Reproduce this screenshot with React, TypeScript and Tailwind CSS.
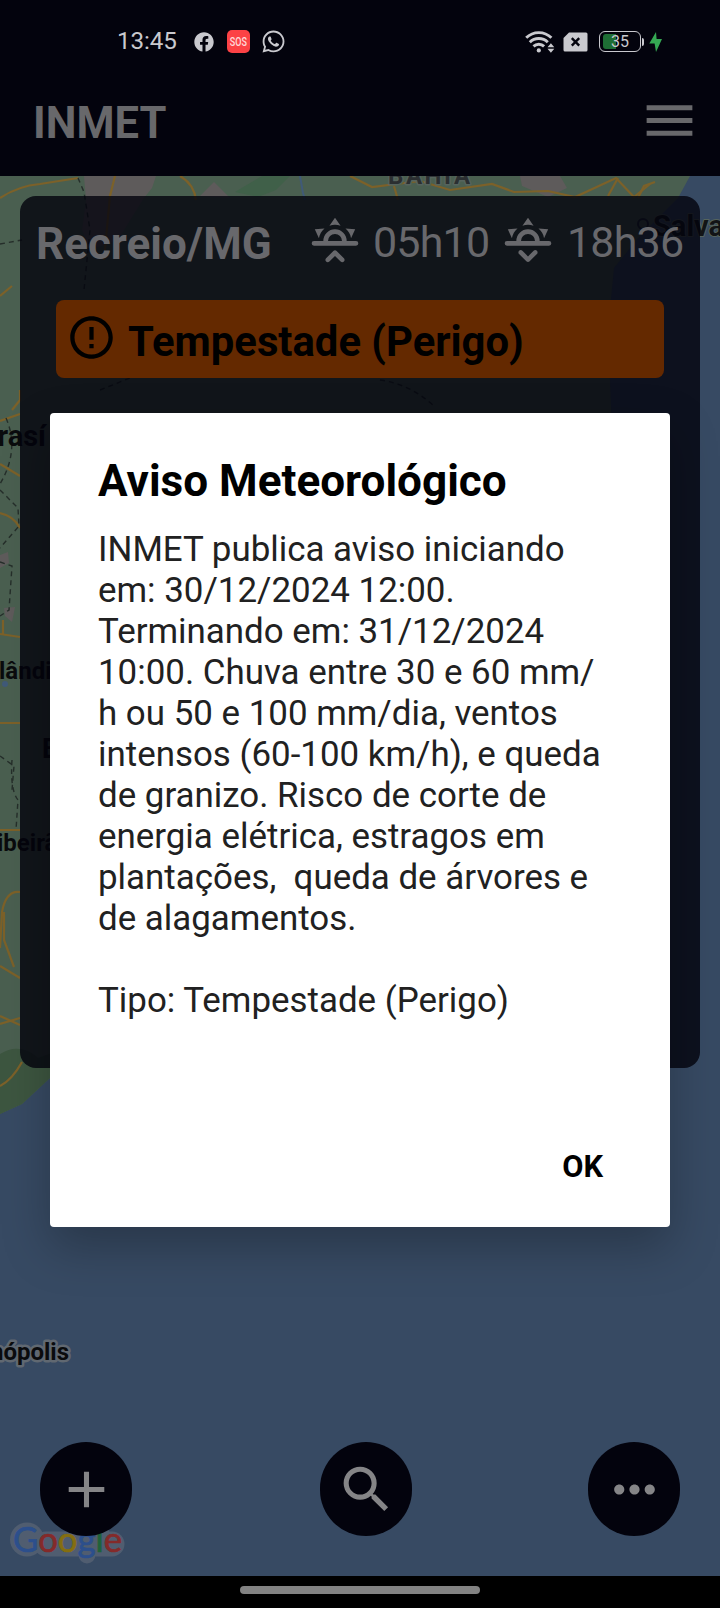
import { FaFacebook, FaWhatsapp } from 'react-icons/fa';
import { MdAdd, MdErrorOutline, MdMenu, MdMoreHoriz, MdSearch } from 'react-icons/md';

const SUN =
  'M3,12H7A5,5 0 0,1 12,7A5,5 0 0,1 17,12H21A1,1 0 0,1 22,13A1,1 0 0,1 21,14H3A1,1 0 0,1 2,13A1,1 0 0,1 3,12M15,12A3,3 0 0,0 12,9A3,3 0 0,0 9,12H15M12,2L14.39,5.42C13.65,5.15 12.84,5 12,5C11.16,5 10.35,5.15 9.61,5.42L12,2M3.34,7L7.5,6.65C6.9,7.16 6.36,7.78 5.94,8.5C5.5,9.24 5.25,10 5.11,10.79L3.34,7M20.65,7L18.88,10.79C18.74,10 18.47,9.23 18.05,8.5C17.63,7.78 17.1,7.15 16.5,6.64L20.65,7';
const UP =
  'M12.71,16.3L15.82,19.41C16.21,19.8 16.21,20.43 15.82,20.82C15.43,21.21 14.8,21.21 14.41,20.82L12,18.41L9.59,20.82C9.2,21.21 8.57,21.21 8.18,20.82C7.79,20.43 7.79,19.8 8.18,19.41L11.29,16.3C11.5,16.1 11.74,16 12,16C12.26,16 12.5,16.1 12.71,16.3Z';
const DOWN =
  'M12.71,20.71L15.82,17.6C16.21,17.21 16.21,16.57 15.82,16.18C15.43,15.79 14.8,15.79 14.41,16.18L12,18.59L9.59,16.18C9.2,15.79 8.57,15.79 8.18,16.18C7.79,16.57 7.79,17.21 8.18,17.6L11.29,20.71C11.5,20.9 11.74,21 12,21C12.26,21 12.5,20.9 12.71,20.71Z';

function SunIcon({ up }: { up?: boolean }) {
  return (
    <svg viewBox="0 0 24 24" className="h-14 w-14 shrink-0" fill="currentColor">
      <path d={SUN} />
      <path d={up ? UP : DOWN} />
    </svg>
  );
}

function StatusBar() {
  return (
    <div className="flex h-[83px] items-center justify-between pl-[117px] pr-[58px] text-[#c9c9ce]">
      <div className="flex items-center">
        <span className="w-[77px] text-[24.2px] leading-none tracking-[-0.1px]">13:45</span>
        <FaFacebook size={20} />
        <span className="ml-[13px] flex h-[23px] w-[23px] items-center justify-center rounded-[5px] bg-[#fc4245] text-[#ffd9d9]">
          <span className="scale-x-75 text-[12px] font-medium leading-none">SOS</span>
        </span>
        <FaWhatsapp size={25} className="ml-[11px]" />
      </div>
      <div className="flex items-center">
        <svg width="30" height="24" viewBox="0 0 30 24" fill="none" stroke="currentColor" strokeWidth="2.9">
          <path d="M1.2 7.8a18 18 0 0 1 25.2 0" />
          <path d="M4.8 12.2a12.8 12.8 0 0 1 18 0" />
          <path d="M8.5 16.4a7.6 7.6 0 0 1 10.6 0" />
          <circle cx="13.8" cy="20.4" r="2.1" fill="currentColor" stroke="none" />
          <path d="M22.5 17.3l3.4-4 3.4 4zM22.5 18.8h6.8l-3.4 4z" fill="currentColor" stroke="none" />
        </svg>
        <svg width="25" height="20" viewBox="0 0 25 20" className="ml-[8px]">
          <path d="M6 0.5h17a1.5 1.5 0 0 1 1.5 1.5v16a1.5 1.5 0 0 1-1.5 1.5h-21a1.5 1.5 0 0 1-1.5-1.5V6z" fill="currentColor" />
          <path d="M8.8 6.2l7.4 7.4M16.2 6.2l-7.4 7.4" stroke="#03030d" strokeWidth="2.4" />
        </svg>
        <div className="ml-[11px] flex items-center">
          <div className="relative flex h-[21px] w-[42px] items-center justify-center rounded-[6px] border-[1.5px] border-[#c9c9ce]">
            <div className="absolute left-[3px] top-[2px] h-[15px] w-[13px] rounded-l-[3px] bg-[#1e6e35]" />
            <span className="relative mt-px text-[16px] leading-none">35</span>
          </div>
          <div className="ml-px h-[8px] w-[2px] rounded-r-full bg-[#c9c9ce]" />
        </div>
        <svg width="13" height="20" viewBox="0 0 13 20" className="ml-[5px]">
          <path d="M7 0L0.3 11.5H5.6L7 20L13 7H7.6Z" fill="#35a853" />
        </svg>
      </div>
    </div>
  );
}

function GoogleMark() {
  return (
    <g>
      <g stroke="#505d70" fill="#505d70" strokeLinecap="round">
        <circle cx="27" cy="1539.5" r="17" stroke="none" />
        <path d="M46 1544H112" strokeWidth="25" />
        <path d="M87 1550V1555M101 1534V1540" strokeWidth="17" />
      </g>
      <text x="13" y="1552" fontSize="35" fontFamily="Lato, sans-serif" textLength="109" lengthAdjust="spacingAndGlyphs" strokeWidth="0.7">
        <tspan fill="#2c4f8c" stroke="#2c4f8c">G</tspan>
        <tspan fill="#842a2a" stroke="#842a2a">o</tspan>
        <tspan fill="#856e10" stroke="#856e10">o</tspan>
        <tspan fill="#2c4f8c" stroke="#2c4f8c">g</tspan>
        <tspan fill="#1f6339" stroke="#1f6339">l</tspan>
        <tspan fill="#842a2a" stroke="#842a2a">e</tspan>
      </text>
    </g>
  );
}

function MapBackground() {
  return (
    <svg viewBox="0 176 720 1400" className="absolute inset-0 h-full w-full" fontFamily="Roboto, sans-serif">
      <rect y="176" width="720" height="1400" fill="#374a63" />
      <path
        d="M0 176H690L678 198L640 236L614 268L608 330L612 430L590 560L520 760L330 900L150 1020L50 1078L22 1104L0 1114Z"
        fill="#4a5f50"
      />
      <path d="M0 1054Q20 1042 38 1058L66 1048V1068L50 1078L22 1104L0 1114Z" fill="#3d5640" />
      {/* farmland */}
      <g fill="#5e5b5b">
        <path d="M84 176H156L152 188L144 198L118 240L90 250L82 230L86 200Z" />
        <path d="M214 182L230 198L200 196Z" />
        <path d="M520 176H560L567 188L548 197L522 186Z" />
        <path d="M0 555L8 552L9 563L0 568ZM4 608L15 607L12 622L5 616Z" />
      </g>
      <path d="M235 192L262 176H290L276 190L258 197Z" fill="#406049" />
      <path d="M300 176L303 193L305 200" stroke="#405a78" strokeWidth="2" fill="none" />
      <circle cx="5" cy="684" r="3" fill="#405a78" />
      {/* roads */}
      <g fill="none" stroke="#7c6129" strokeWidth="2.2">
        <path d="M0 198Q18 186 40 184L78 178" />
        <path d="M115 176L110 196L104 260" />
        <path d="M180 176Q194 184 196 200" />
        <path d="M350 176L372 187L420 181L450 190L492 184L514 192L548 191L575 197L616 178L634 197L650 184" />
        <path d="M394 186L398 200M608 196L618 178M638 198L644 186L655 182" />
        <path d="M0 296L12 286" />
        <path d="M0 421L20 414M0 464L20 476M0 513Q14 516 20 528M0 634L20 637M3 634V620M0 723H20" />
        <path d="M0 830H20M20 892Q6 890 2 912L0 948M4 912V940L14 967M0 966L20 978" />
        <path d="M0 1024L20 1018M0 1016L20 1025M0 1086Q12 1080 22 1062" />
        <path d="M20 390V400L12 410" />
      </g>
      {/* state borders */}
      <g fill="none" stroke="#252e2a" strokeWidth="1.4" strokeDasharray="5 4">
        <path d="M78 178L84 192L90 230L84 290" />
        <path d="M0 244L22 240" />
        <path d="M6 418Q20 450 0 484M0 490L18 508L19 526L0 548M0 562L12 566L9 610L0 616M0 756L14 766L12 790" />
        <path d="M12 760Q10 790 18 800L16 830M100 390L130 378M380 380Q410 384 434 406" />
      </g>
      <g fill="#121416" fontWeight="700" stroke="#56645d" strokeWidth="3" paintOrder="stroke" strokeLinejoin="round">
        <text x="388" y="183.5" fontSize="24" textLength="82" fill="#2b2f31">BAHIA</text>
        <text x="653" y="235.5" fontSize="29" strokeWidth="2">Salva</text>
        <circle cx="643" cy="224" r="5" fill="none" stroke="#202733" strokeWidth="2" />
      </g>
      <g fill="#0a0b0d" fontWeight="700">
        <text x="46" y="446" fontSize="29" textAnchor="end">rasí</text>
        <text x="-1" y="679" fontSize="24">lândi</text>
        <text x="42" y="758" fontSize="27">B</text>
        <text x="-3" y="851" fontSize="24">ibeirã</text>
        <text x="69" y="1360" fontSize="24" textAnchor="end" stroke="#606871" strokeWidth="5" paintOrder="stroke" strokeLinejoin="round">
          nópolis
        </text>
      </g>
      <GoogleMark />
    </svg>
  );
}

function WeatherPanel() {
  return (
    <section className="relative mx-5 mt-5 h-[872px] rounded-2xl bg-[#03020ccc] text-[#68686c]">
      <div className="flex h-[90px] items-center pl-[16px]">
        <h2 className="mt-[5px] w-[271px] text-[44px] font-bold leading-none">Recreio/MG</h2>
        <SunIcon up />
        <span className="ml-[10px] mt-[3px] w-[127px] text-[43px] leading-none tracking-[-0.8px]">05h10</span>
        <SunIcon />
        <span className="ml-[11px] mt-[3px] text-[43px] leading-none tracking-[-0.8px]">18h36</span>
      </div>
      <div className="mx-9 mt-[14px] flex h-[78px] items-center rounded-lg bg-[#642900] pl-[10px] text-black">
        <MdErrorOutline size={51} className="-mt-[4px]" />
        <span className="ml-[11px] mt-[6px] text-[41.8px] font-bold leading-none">Tempestade (Perigo)</span>
      </div>
    </section>
  );
}

const actions = [
  { label: 'add', Icon: MdAdd },
  { label: 'search', Icon: MdSearch },
  { label: 'more', Icon: MdMoreHoriz },
];

export default function App() {
  return (
    <div className="relative flex h-[1608px] w-[720px] flex-col overflow-hidden bg-black font-[Roboto,sans-serif]">
      <header className="h-[176px] bg-[#03030d]">
        <StatusBar />
        <div className="flex h-[75px] items-center justify-between pl-[33px] pr-5 text-[#68686b]">
          <h1 className="mt-[6px] text-[43.5px] font-bold leading-none">INMET</h1>
          <MdMenu size={61} />
        </div>
      </header>

      <main className="relative flex h-[1400px] flex-col justify-between">
        <MapBackground />
        <WeatherPanel />
        <div className="relative mb-10 flex pl-10 text-[#858587]">
          {actions.map(({ label, Icon }) => (
            <button
              key={label}
              aria-label={label}
              className="mr-[188px] flex h-[94px] w-[92px] shrink-0 items-center justify-center rounded-full bg-[#03030d] last:mr-0 nth-2:mr-[176px]"
            >
              <Icon size={61} />
            </button>
          ))}
        </div>
      </main>

      <footer className="flex h-8 items-start justify-center pt-[10px]">
        <div className="h-2 w-[240px] rounded-full bg-[#838383]" />
      </footer>

      <div className="absolute inset-0 flex items-center px-[50px] pt-8">
        <div
          role="dialog"
          className="flex h-[814px] w-full flex-col rounded bg-white px-12 pt-[42px] shadow-[0_20px_48px_rgba(0,0,0,0.26)]"
        >
          <h3 className="text-[44.1px] font-bold leading-[52px] text-black">Aviso Meteorológico</h3>
          <p className="mt-[22px] whitespace-pre text-[34.9px] leading-[41px] text-[#212121]">
            {`INMET publica aviso iniciando
em: 30/12/2024 12:00.
Terminando em: 31/12/2024
10:00. Chuva entre 30 e 60 mm/
h ou 50 e 100 mm/dia, ventos
intensos (60-100 km/h), e queda
de granizo. Risco de corte de
energia elétrica, estragos em
plantações,  queda de árvores e
de alagamentos.

Tipo: Tempestade (Perigo)`}
          </p>
          <button className="mb-[42px] mr-[19px] mt-auto self-end text-[30.8px] font-bold leading-[36px] text-black">
            OK
          </button>
        </div>
      </div>
    </div>
  );
}
